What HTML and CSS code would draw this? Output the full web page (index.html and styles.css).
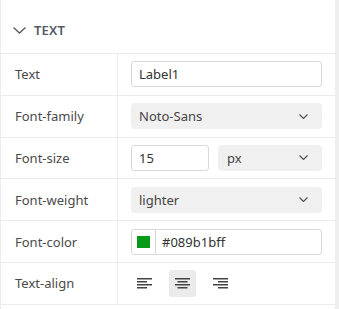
FILE: index.html
```html
<!DOCTYPE html>
<html lang="en">
<head>
  <meta charset="UTF-8" />
  <title>Text properties</title>
  <link rel="stylesheet" href="styles.css">
</head>
<body>
  <div class="layout">
    <div class="panel">
      <!-- Section header -->
      <div class="panel-header">
        <svg class="caret" width="13" height="7" viewBox="0 0 13 7">
          <polyline points="0.5,0.5 6.5,6 12.5,0.5" fill="none" stroke="#555b66" stroke-width="1.3" />
        </svg>
        <span class="panel-title">TEXT</span>
      </div>

      <div class="prop-row">
        <div class="prop-label">Text</div>
        <div class="prop-value">
          <input class="field" type="text" value="Label1" />
        </div>
      </div>

      <div class="prop-row">
        <div class="prop-label">Font-family</div>
        <div class="prop-value">
          <div class="select">
            <span>Noto-Sans</span>
            <svg width="9" height="5" viewBox="0 0 9 5"><polyline points="0.5,0.5 4.5,4.5 8.5,0.5" fill="none" stroke="#555" stroke-width="1.2" /></svg>
          </div>
        </div>
      </div>

      <div class="prop-row">
        <div class="prop-label">Font-size</div>
        <div class="prop-value split">
          <input class="field size-field" type="text" value="15" />
          <div class="select unit-select">
            <span>px</span>
            <svg width="9" height="5" viewBox="0 0 9 5"><polyline points="0.5,0.5 4.5,4.5 8.5,0.5" fill="none" stroke="#555" stroke-width="1.2" /></svg>
          </div>
        </div>
      </div>

      <div class="prop-row">
        <div class="prop-label">Font-weight</div>
        <div class="prop-value">
          <div class="select">
            <span>lighter</span>
            <svg width="9" height="5" viewBox="0 0 9 5"><polyline points="0.5,0.5 4.5,4.5 8.5,0.5" fill="none" stroke="#555" stroke-width="1.2" /></svg>
          </div>
        </div>
      </div>

      <div class="prop-row">
        <div class="prop-label">Font-color</div>
        <div class="prop-value">
          <div class="color-field">
            <div class="swatch-box"><span class="swatch"></span></div>
            <span class="color-text">#089b1bff</span>
          </div>
        </div>
      </div>

      <div class="prop-row">
        <div class="prop-label">Text-align</div>
        <div class="prop-value align-group">
          <button class="align-btn">
            <svg width="15" height="11" viewBox="0 0 15 11">
              <rect x="0" y="0" width="15" height="1.5" />
              <rect x="0" y="3" width="10" height="1.5" />
              <rect x="0" y="6" width="15" height="1.5" />
              <rect x="0" y="9" width="10" height="1.5" />
            </svg>
          </button>
          <button class="align-btn active">
            <svg width="15" height="11" viewBox="0 0 15 11">
              <rect x="0" y="0" width="15" height="1.5" />
              <rect x="2.5" y="3" width="10" height="1.5" />
              <rect x="0" y="6" width="15" height="1.5" />
              <rect x="2.5" y="9" width="10" height="1.5" />
            </svg>
          </button>
          <button class="align-btn">
            <svg width="15" height="11" viewBox="0 0 15 11">
              <rect x="0" y="0" width="15" height="1.5" />
              <rect x="5" y="3" width="10" height="1.5" />
              <rect x="0" y="6" width="15" height="1.5" />
              <rect x="5" y="9" width="10" height="1.5" />
            </svg>
          </button>
        </div>
      </div>

      <div class="prop-row"></div>
    </div>
    <div class="scroll-strip"></div>
  </div>
</body>
</html>
```

FILE: styles.css
```css
body {
  margin: 0;
  padding: 0;
  background-color: #fff;
  font-family: "Noto Sans", "Open Sans", sans-serif;
  color: #444;
  overflow: hidden;
}

/* Panel with scrollbar strip on the right */
.layout {
  display: flex;
  width: 339px;
  height: 309px;
  overflow: hidden;
}

.panel {
  width: 334px;
  border-left: 1px solid #ececec;
}

.scroll-strip {
  width: 4px;
  background-color: #efefef;
}

.panel-header {
  display: flex;
  align-items: center;
  height: 54px;
  padding: 6px 0 0 12px;
  border-bottom: 1px solid #ececec;
  box-sizing: border-box;
}

.caret {
  margin-right: 8px;
  margin-top: 1px;
}

.panel-title {
  font-size: 13px;
  font-weight: 600;
  color: #555b66;
  letter-spacing: 0.2px;
}

/* Property rows */
.prop-row {
  display: grid;
  grid-template-columns: 117px 1fr;
  height: 41.8px;
  border-bottom: 1px solid #ececec;
  box-sizing: border-box;
}

.prop-label {
  display: flex;
  align-items: center;
  padding-left: 14px;
  font-size: 13px;
  color: #4a4a4a;
  border-right: 1px solid #ececec;
}

.prop-value {
  display: flex;
  align-items: center;
  padding: 0 13px;
}

.field {
  width: 100%;
  height: 26px;
  box-sizing: border-box;
  border: 1px solid #d9d9d9;
  border-radius: 3px;
  padding: 0 7px;
  font-family: inherit;
  font-size: 13px;
  color: #333;
  outline: none;
}

.select {
  display: flex;
  align-items: center;
  justify-content: space-between;
  width: 100%;
  height: 26px;
  box-sizing: border-box;
  padding: 0 14px 0 8px;
  background-color: #f0f0f0;
  border-radius: 4px;
  font-size: 13px;
  color: #444;
}

.split {
  gap: 9px;
}

.size-field {
  width: 78px;
  flex: none;
}

.unit-select {
  flex: 1;
  padding-left: 9px;
}

/* Color picker field */
.color-field {
  display: flex;
  align-items: center;
  width: 100%;
  height: 26px;
  box-sizing: border-box;
  border: 1px solid #d9d9d9;
  border-radius: 3px;
}

.swatch-box {
  display: flex;
  align-items: center;
  justify-content: center;
  width: 23px;
  height: 100%;
  border-right: 1px solid #d9d9d9;
}

.swatch {
  width: 13px;
  height: 12px;
  background-color: #089b1b;
}

.color-text {
  padding-left: 6px;
  font-size: 13px;
  color: #333;
}

/* Text align buttons */
.align-group {
  gap: 11px;
}

.align-btn {
  display: flex;
  align-items: center;
  justify-content: center;
  width: 27px;
  height: 27px;
  padding: 0;
  border: none;
  border-radius: 3px;
  background: none;
  fill: #444;
}

.align-btn.active {
  background-color: #ebebeb;
}
```
